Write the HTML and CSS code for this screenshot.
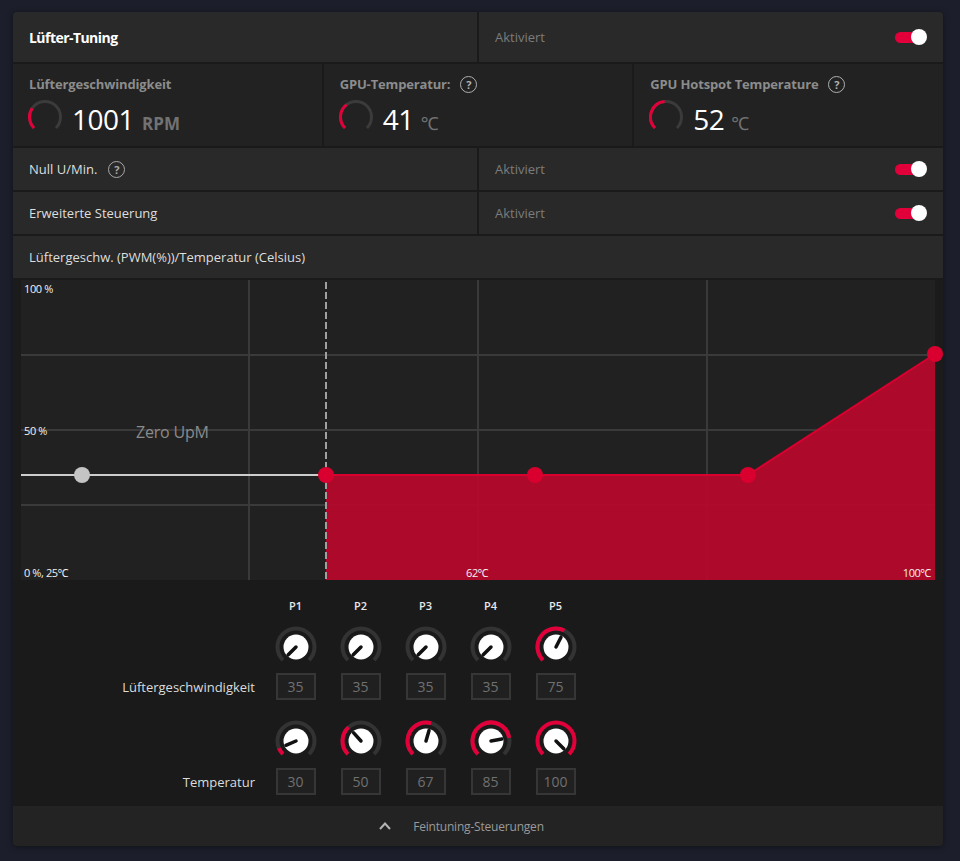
FILE: index.html
```html
<!DOCTYPE html>
<html lang="de">
<head>
<meta charset="utf-8">
<title>Lüfter-Tuning</title>
<link rel="stylesheet" href="styles.css">
</head>
<body>
<div class="panel">
  <div class="row two head">
    <div class="cell"><span class="title">Lüfter-Tuning</span></div>
    <div class="cell right"><span class="state">Aktiviert</span><span class="toggle"><span class="track"></span><span class="thumb"></span></span></div>
  </div>

  <div class="row three">
    <div class="stat">
      <div class="slabel">Lüftergeschwindigkeit</div>
      <div class="sval">
        <svg class="gauge" viewBox="0 0 34 34"><path class="gring" d="M6.04 27.96A15.5 15.5 0 1 1 27.96 27.96"/><path class="garc" d="M6.04 27.96A15.5 15.5 0 0 1 4.30 8.11"/></svg>
        <span class="reading"><span class="num">1001</span><span class="unit bold">RPM</span></span>
      </div>
    </div>
    <div class="stat">
      <div class="slabel">GPU-Temperatur:<span class="help">?</span></div>
      <div class="sval">
        <svg class="gauge" viewBox="0 0 34 34"><path class="gring" d="M6.04 27.96A15.5 15.5 0 1 1 27.96 27.96"/><path class="garc" d="M6.04 27.96A15.5 15.5 0 0 1 7.67 4.62"/></svg>
        <span class="reading"><span class="num">41</span><span class="unit">℃</span></span>
      </div>
    </div>
    <div class="stat">
      <div class="slabel">GPU Hotspot Temperature<span class="help">?</span></div>
      <div class="sval">
        <svg class="gauge" viewBox="0 0 34 34"><path class="gring" d="M6.04 27.96A15.5 15.5 0 1 1 27.96 27.96"/><path class="garc" d="M6.04 27.96A15.5 15.5 0 0 1 15.65 1.56"/></svg>
        <span class="reading"><span class="num">52</span><span class="unit">℃</span></span>
      </div>
    </div>
  </div>

  <div class="row two">
    <div class="cell"><span class="lbl">Null U/Min.</span><span class="help">?</span></div>
    <div class="cell right"><span class="state">Aktiviert</span><span class="toggle"><span class="track"></span><span class="thumb"></span></span></div>
  </div>

  <div class="row two">
    <div class="cell"><span class="lbl">Erweiterte Steuerung</span></div>
    <div class="cell right"><span class="state">Aktiviert</span><span class="toggle"><span class="track"></span><span class="thumb"></span></span></div>
  </div>

  <div class="row one">
    <div class="cell"><span class="lbl">Lüftergeschw. (PWM(%))/Temperatur (Celsius)</span></div>
  </div>

  <div class="lower">
    <div class="chartwrap">
      <div class="chart">
        <svg class="plot" width="914" height="300" viewBox="0 0 914 300">
          <g class="grid">
            <line x1="228" y1="0" x2="228" y2="300"/>
            <line x1="457" y1="0" x2="457" y2="300"/>
            <line x1="686" y1="0" x2="686" y2="300"/>
            <line x1="0" y1="75" x2="914" y2="75"/>
            <line x1="0" y1="150" x2="914" y2="150"/>
            <line x1="0" y1="225" x2="914" y2="225"/>
          </g>
          <polygon class="fill" points="305,195 727,195 914,74 914,300 305,300"/>
          <line class="dash" x1="305" y1="2" x2="305" y2="300"/>
          <line class="zero" x1="0" y1="195" x2="305" y2="195"/>
          <polyline class="curve" points="305,195 727,195 914,74"/>
          <circle class="dotg" cx="61" cy="195" r="8"/>
          <circle class="dotr" cx="305" cy="195" r="8"/>
          <circle class="dotr" cx="514" cy="195" r="8"/>
          <circle class="dotr" cx="727" cy="195" r="8"/>
          <circle class="dotr" cx="914" cy="74" r="8"/>
        </svg>
        <span class="axis a100">100 %</span>
        <span class="axis a50">50 %</span>
        <span class="axis a0">0 %, 25℃</span>
        <span class="axis a62">62℃</span>
        <span class="axis amax">100℃</span>
        <span class="zerolbl">Zero UpM</span>
      </div>
    </div>

    <div class="knobs">
      <div class="krow khead">
        <div class="klabel"></div>
        <div class="kcell">P1</div><div class="kcell">P2</div><div class="kcell">P3</div><div class="kcell">P4</div><div class="kcell">P5</div>
      </div>
      <div class="krow kdials">
        <div class="klabel"></div>
        <div class="kcell"><svg class="dial" viewBox="0 0 42 42"><path class="ring" d="M7.92 34.08A18.5 18.5 0 1 1 34.08 34.08"/><circle class="disc" cx="21" cy="21" r="12.5"/><line class="needle" x1="21" y1="21" x2="13.22" y2="28.78"/></svg></div>
        <div class="kcell"><svg class="dial" viewBox="0 0 42 42"><path class="ring" d="M7.92 34.08A18.5 18.5 0 1 1 34.08 34.08"/><circle class="disc" cx="21" cy="21" r="12.5"/><line class="needle" x1="21" y1="21" x2="13.22" y2="28.78"/></svg></div>
        <div class="kcell"><svg class="dial" viewBox="0 0 42 42"><path class="ring" d="M7.92 34.08A18.5 18.5 0 1 1 34.08 34.08"/><circle class="disc" cx="21" cy="21" r="12.5"/><line class="needle" x1="21" y1="21" x2="13.22" y2="28.78"/></svg></div>
        <div class="kcell"><svg class="dial" viewBox="0 0 42 42"><path class="ring" d="M7.92 34.08A18.5 18.5 0 1 1 34.08 34.08"/><circle class="disc" cx="21" cy="21" r="12.5"/><line class="needle" x1="21" y1="21" x2="13.22" y2="28.78"/></svg></div>
        <div class="kcell"><svg class="dial" viewBox="0 0 42 42"><path class="ring" d="M7.92 34.08A18.5 18.5 0 1 1 34.08 34.08"/><path class="arc" d="M7.92 34.08A18.5 18.5 0 0 1 29.40 4.52"/><circle class="disc" cx="21" cy="21" r="12.5"/><line class="needle" x1="21" y1="21" x2="25.99" y2="11.20"/></svg></div>
      </div>
      <div class="krow kinputs">
        <div class="klabel">Lüftergeschwindigkeit</div>
        <div class="kcell"><span class="box">35</span></div>
        <div class="kcell"><span class="box">35</span></div>
        <div class="kcell"><span class="box">35</span></div>
        <div class="kcell"><span class="box">35</span></div>
        <div class="kcell"><span class="box">75</span></div>
      </div>
      <div class="krow kdials second">
        <div class="klabel"></div>
        <div class="kcell"><svg class="dial" viewBox="0 0 42 42"><path class="ring" d="M7.92 34.08A18.5 18.5 0 1 1 34.08 34.08"/><path class="arc" d="M7.92 34.08A18.5 18.5 0 0 1 3.97 28.23"/><circle class="disc" cx="21" cy="21" r="12.5"/><line class="needle" x1="21" y1="21" x2="10.87" y2="25.30"/></svg></div>
        <div class="kcell"><svg class="dial" viewBox="0 0 42 42"><path class="ring" d="M7.92 34.08A18.5 18.5 0 1 1 34.08 34.08"/><path class="arc" d="M7.92 34.08A18.5 18.5 0 0 1 8.62 7.25"/><circle class="disc" cx="21" cy="21" r="12.5"/><line class="needle" x1="21" y1="21" x2="13.64" y2="12.83"/></svg></div>
        <div class="kcell"><svg class="dial" viewBox="0 0 42 42"><path class="ring" d="M7.92 34.08A18.5 18.5 0 1 1 34.08 34.08"/><path class="arc" d="M7.92 34.08A18.5 18.5 0 0 1 26.10 3.22"/><circle class="disc" cx="21" cy="21" r="12.5"/><line class="needle" x1="21" y1="21" x2="24.03" y2="10.43"/></svg></div>
        <div class="kcell"><svg class="dial" viewBox="0 0 42 42"><path class="ring" d="M7.92 34.08A18.5 18.5 0 1 1 34.08 34.08"/><path class="arc" d="M7.92 34.08A18.5 18.5 0 1 1 39.22 17.79"/><circle class="disc" cx="21" cy="21" r="12.5"/><line class="needle" x1="21" y1="21" x2="31.83" y2="19.09"/></svg></div>
        <div class="kcell"><svg class="dial" viewBox="0 0 42 42"><path class="arc" d="M7.92 34.08A18.5 18.5 0 1 1 34.08 34.08"/><circle class="disc" cx="21" cy="21" r="12.5"/><line class="needle" x1="21" y1="21" x2="28.78" y2="28.78"/></svg></div>
      </div>
      <div class="krow kinputs second">
        <div class="klabel">Temperatur</div>
        <div class="kcell"><span class="box">30</span></div>
        <div class="kcell"><span class="box">50</span></div>
        <div class="kcell"><span class="box">67</span></div>
        <div class="kcell"><span class="box">85</span></div>
        <div class="kcell"><span class="box">100</span></div>
      </div>
    </div>
  </div>

  <div class="footer">
    <svg class="chev" viewBox="0 0 12 8"><polyline points="1,7 6,1.5 11,7"/></svg>
    <span>Feintuning-Steuerungen</span>
  </div>
</div>
</body>
</html>
```

FILE: styles.css
```css
* { box-sizing: border-box; }

body {
  margin: 0;
  background: #1c1f2b;
  font-family: "Open Sans", "Noto Sans", "DejaVu Sans", sans-serif;
  height: 861px;
  overflow: hidden;
}

.panel {
  width: 930px;
  margin: 12px 0 0 13px;
  display: flex;
  flex-direction: column;
  gap: 2px;
  background: #1a1a1a;
  border-radius: 4px;
  overflow: hidden;
  box-shadow: 0 1px 6px rgba(0, 0, 0, 0.45);
}

.row {
  display: grid;
  gap: 2px;
  height: 42px;
}

.row.two { grid-template-columns: 1fr 1fr; }
.row.one { grid-template-columns: 1fr; }
.row.head { height: 50px; }
.row.three { grid-template-columns: repeat(3, 1fr); height: 82px; }

.cell {
  background: #292929;
  display: flex;
  align-items: center;
  padding: 0 16px;
}

.cell.right { justify-content: space-between; }

.title {
  font-size: 14px;
  font-weight: 700;
  color: #ffffff;
  letter-spacing: -0.55px;
}

.lbl {
  font-size: 13px;
  color: #dedede;
}

.state {
  font-size: 13px;
  color: #7c7c7c;
}

.toggle {
  position: relative;
  width: 32px;
  height: 16px;
  display: inline-block;
}

.track {
  position: absolute;
  left: 0;
  top: 2.5px;
  width: 26px;
  height: 11px;
  border-radius: 6px;
  background: #e2003a;
}

.thumb {
  position: absolute;
  right: 0;
  top: 0;
  width: 16px;
  height: 16px;
  border-radius: 50%;
  background: #ffffff;
}

.help {
  display: inline-flex;
  align-items: center;
  justify-content: center;
  width: 17px;
  height: 17px;
  margin-left: 11px;
  border: 1.7px solid #a8a8a8;
  border-radius: 50%;
  color: #a8a8a8;
  font-size: 11px;
  font-weight: 700;
  line-height: 1;
  letter-spacing: 0;
}

.slabel .help { margin-left: 10px; border-color: #b0b0b0; color: #b0b0b0; }

.stat {
  background: #222222;
  padding: 11px 16px 0;
}

.slabel {
  display: flex;
  align-items: center;
  height: 18px;
  font-size: 13px;
  font-weight: 700;
  color: #8c8c8c;
  letter-spacing: -0.15px;
}

.sval {
  display: flex;
  align-items: center;
  margin-top: 7px;
  height: 34px;
}

.gauge {
  width: 34px;
  height: 34px;
  margin-left: -1px;
  margin-right: 10px;
  flex: none;
}

.gring { fill: none; stroke: #3b3b3b; stroke-width: 3; }
.garc { fill: none; stroke: #e2003a; stroke-width: 3; }

.reading {
  display: flex;
  align-items: baseline;
  margin-top: 4px;
}

.num {
  font-size: 28px;
  color: #ffffff;
  letter-spacing: -0.5px;
  line-height: 34px;
}

.unit {
  font-size: 18px;
  color: #727272;
  margin-left: 7px;
}

.unit.bold { font-weight: 700; font-size: 17px; margin-left: 8px; }

.lower {
  background: #1b1b1b;
}

.chartwrap {
  padding: 0 8px;
}

.chart {
  position: relative;
  width: 914px;
  height: 300px;
  background: #212121;
}

.plot { display: block; overflow: visible; }

.grid line { stroke: #3a3a3a; stroke-width: 2; }
.fill { fill: #bd072b; fill-opacity: 0.9; }
.dash { stroke: #a0a0a0; stroke-width: 2; stroke-dasharray: 7 3; }
.zero { stroke: #cdcdcd; stroke-width: 2; }
.curve { fill: none; stroke: #d8002f; stroke-width: 2; }
.dotr { fill: #d9002f; }
.dotg { fill: #c4c4c4; }

.axis {
  position: absolute;
  font-size: 11px;
  line-height: 11px;
  color: #f2f2f2;
  letter-spacing: -0.4px;
}

.a100 { left: 3px; top: 3px; }
.a50 { left: 3px; top: 145px; }
.a0 { left: 3px; top: 287px; }
.a62 { left: 445px; top: 287px; }
.amax { right: 4px; top: 287px; }

.zerolbl {
  position: absolute;
  left: 115px;
  top: 142px;
  font-size: 16px;
  line-height: 20px;
  color: #8a8a8a;
  letter-spacing: -0.2px;
}

.knobs {
  height: 224px;
  padding-top: 20px;
  background: #1a1a1a;
}

.krow { display: flex; align-items: center; }

.klabel {
  width: 250px;
  padding-right: 8px;
  text-align: right;
  font-size: 13px;
  color: #dcdcdc;
}

.kcell {
  width: 65px;
  display: flex;
  justify-content: center;
}

.khead { height: 12px; }
.khead .kcell {
  font-size: 11px;
  font-weight: 600;
  color: #e8e8e8;
  line-height: 12px;
}

.kdials { height: 42px; margin-top: 14px; }
.kdials.second { margin-top: 20px; }
.kinputs { height: 27px; margin-top: 5px; }
.kinputs.second { margin-top: 6px; }

.dial { width: 42px; height: 42px; display: block; }
.ring { fill: none; stroke: #333333; stroke-width: 4; }
.arc { fill: none; stroke: #e2003a; stroke-width: 4; }
.disc { fill: #ffffff; }
.needle { stroke: #111111; stroke-width: 3.5; stroke-linecap: round; }

.box {
  width: 40px;
  height: 27px;
  border: 2px solid #363636;
  background: #202020;
  color: #707070;
  font-size: 14px;
  display: flex;
  align-items: center;
  justify-content: center;
}

.footer {
  height: 40px;
  background: #232323;
  display: flex;
  align-items: center;
  justify-content: center;
  gap: 22px;
  padding-right: 33px;
  font-size: 12px;
  color: #9a9a9a;
  letter-spacing: -0.2px;
}

.chev { width: 12px; height: 8px; display: block; }
.chev polyline { fill: none; stroke: #b4b4b4; stroke-width: 2; }
```
